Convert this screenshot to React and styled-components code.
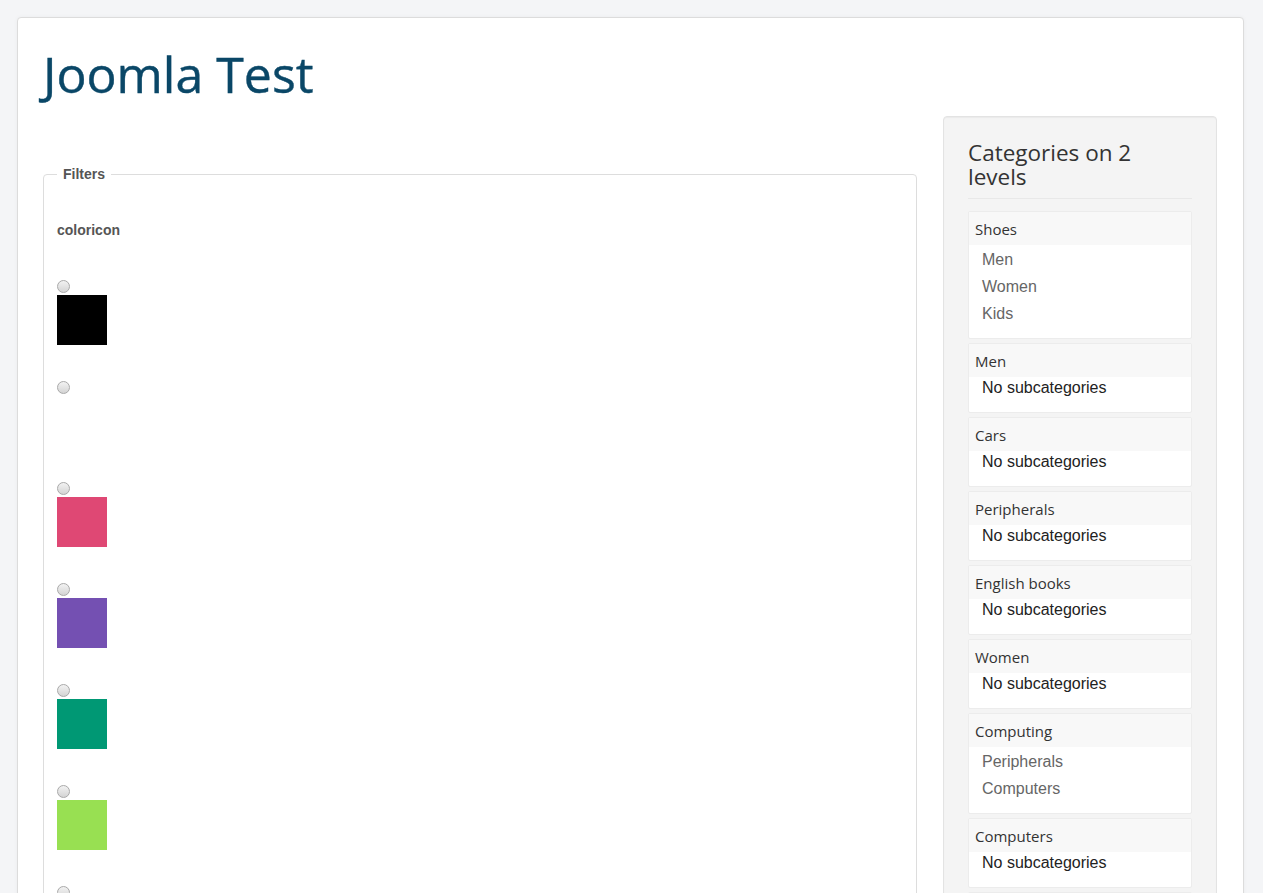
import React from "react";
import styled, { createGlobalStyle } from "styled-components";

const GlobalStyle = createGlobalStyle`
  html, body {
    margin: 0;
    padding: 0;
    background: #f4f5f7;
  }
  body {
    padding: 17px 19px 0 17px;
    font-family: "Liberation Sans", Arial, sans-serif;
    font-size: 14px;
    color: #333;
  }
`;

const Container = styled.div`
  background: #fff;
  border: 1px solid #dcdcdc;
  border-radius: 4px;
  padding: 20px 25px 40px;
  box-shadow: 0 0 4px rgba(0, 0, 0, 0.04);
`;

const SiteTitle = styled.h1`
  margin: 0;
  font-family: "Open Sans", sans-serif;
  font-weight: 500;
  font-size: 50px;
  line-height: 72px;
  color: #0a4767;
  -webkit-text-stroke: 0.4px #0a4767;
`;

const Columns = styled.div`
  display: grid;
  grid-template-columns: 874px 274px;
  gap: 26px;
  margin-top: 6px;
`;

const Main = styled.div`
  padding-top: 50px;
`;

const Fieldset = styled.fieldset`
  margin: 0;
  border: 1px solid #dddddd;
  border-radius: 4px;
  padding: 40px 13px 0;
  min-height: 760px;
`;

const Legend = styled.legend`
  margin-left: 0;
  padding: 0 6px;
  font-weight: 700;
  font-size: 14px;
  color: #555;
`;

const FilterName = styled.div`
  font-weight: 700;
  font-size: 14px;
  color: #555;
  margin-bottom: 42px;
`;

const Option = styled.label`
  display: flex;
  flex-direction: column;
  align-items: flex-start;
  margin-bottom: 36px;
`;

const Radio = styled.input.attrs({ type: "radio", name: "coloricon" })`
  appearance: none;
  margin: 0 0 2px;
  width: 13px;
  height: 13px;
  border-radius: 50%;
  border: 1px solid #a9a9a9;
  background: linear-gradient(#f2f2f2, #d4d4d4);
  box-sizing: border-box;
`;

const Swatch = styled.span`
  display: block;
  width: 50px;
  height: 50px;
  background: ${({ $color }) => $color};
`;

const Well = styled.aside`
  align-self: start;
  background: #f4f4f4;
  border: 1px solid #e3e3e3;
  border-radius: 4px;
  padding: 24px 24px 30px;
  box-shadow: inset 0 1px 1px rgba(0, 0, 0, 0.04);
`;

const WellTitle = styled.h3`
  margin: 0 0 12px;
  padding-bottom: 9px;
  border-bottom: 1px solid #e8e8e8;
  font-family: "Open Sans", sans-serif;
  font-weight: 400;
  font-size: 22.5px;
  line-height: 24px;
  color: #333;
`;

const CatList = styled.div`
  display: flex;
  flex-direction: column;
  gap: 4px;
`;

const CatBox = styled.div`
  background: #fff;
  border: 1px solid #ececec;
  border-radius: 2px;
`;

const CatHead = styled.div`
  background: #f8f8f8;
  padding: 0 6px;
  height: 33px;
  display: flex;
  align-items: center;
  font-family: "Open Sans", sans-serif;
  font-size: 15px;
  color: #333;
`;

const SubList = styled.ul`
  list-style: none;
  margin: 0;
  padding: 1px 0 11px 13px;
`;

const SubItem = styled.li`
  font-size: 16px;
  line-height: 27px;
  color: #666;
`;

const Empty = styled.div`
  padding: 0 0 13px 13px;
  font-size: 16px;
  line-height: 22px;
  color: #222;
`;

const colors = ["#000000", "#ffffff", "#df4874", "#7450b2", "#009874", "#98e052", "#ffffff"];

const categories = [
  { name: "Shoes", subs: ["Men", "Women", "Kids"] },
  { name: "Men", subs: [] },
  { name: "Cars", subs: [] },
  { name: "Peripherals", subs: [] },
  { name: "English books", subs: [] },
  { name: "Women", subs: [] },
  { name: "Computing", subs: ["Peripherals", "Computers"] },
  { name: "Computers", subs: [] },
  { name: "Kids", subs: [] },
];

export default function App() {
  return (
    <>
      <GlobalStyle />
      <Container>
        <SiteTitle>Joomla Test</SiteTitle>
        <Columns>
          <Main>
            <Fieldset>
              <Legend>Filters</Legend>
              <FilterName>coloricon</FilterName>
              {colors.map((c, i) => (
                <Option key={i}>
                  <Radio />
                  <Swatch $color={c} />
                </Option>
              ))}
            </Fieldset>
          </Main>
          <Well>
            <WellTitle>Categories on 2 levels</WellTitle>
            <CatList>
              {categories.map((cat) => (
                <CatBox key={cat.name}>
                  <CatHead>{cat.name}</CatHead>
                  {cat.subs.length ? (
                    <SubList>
                      {cat.subs.map((s) => (
                        <SubItem key={s}>{s}</SubItem>
                      ))}
                    </SubList>
                  ) : (
                    <Empty>No subcategories</Empty>
                  )}
                </CatBox>
              ))}
            </CatList>
          </Well>
        </Columns>
      </Container>
    </>
  );
}
